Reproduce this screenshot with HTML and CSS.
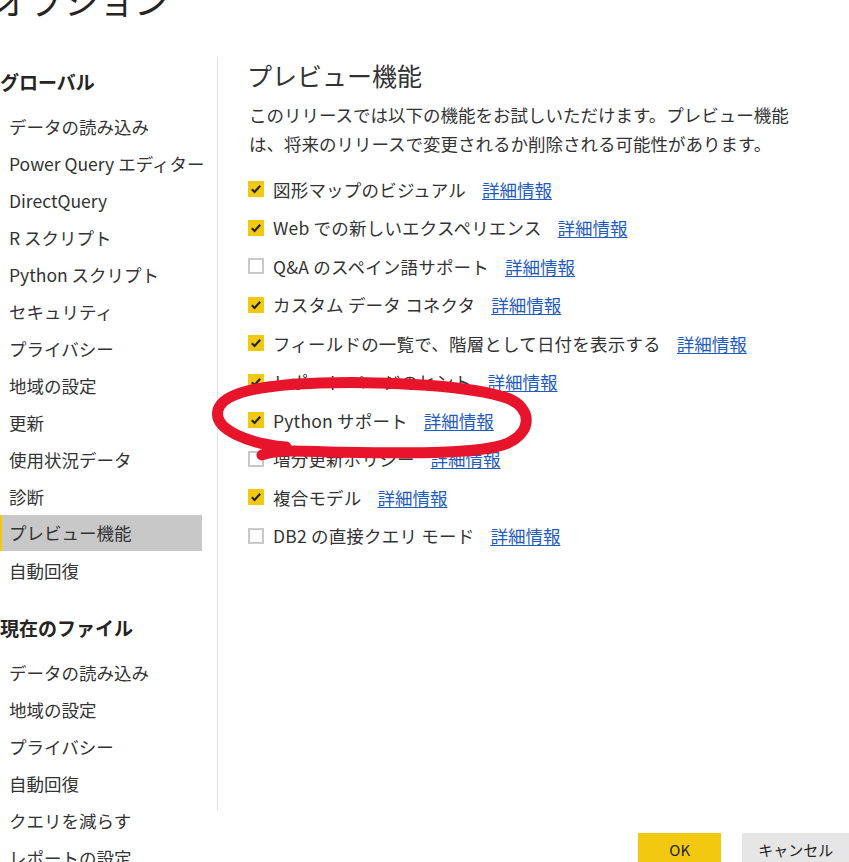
FILE: index.html
```html
<!DOCTYPE html>
<html lang="ja">
<head>
<meta charset="utf-8">
<title>オプション</title>
<link rel="stylesheet" href="styles.css">
</head>
<body>
<div class="page">
  <h1 class="title">オプション</h1>
  <div class="body">
    <nav class="sidebar">
      <h2 class="nav-heading">グローバル</h2>
      <ul class="nav-list">
        <li class="nav-item">データの読み込み</li>
        <li class="nav-item">Power Query エディター</li>
        <li class="nav-item">DirectQuery</li>
        <li class="nav-item">R スクリプト</li>
        <li class="nav-item">Python スクリプト</li>
        <li class="nav-item">セキュリティ</li>
        <li class="nav-item">プライバシー</li>
        <li class="nav-item">地域の設定</li>
        <li class="nav-item">更新</li>
        <li class="nav-item">使用状況データ</li>
        <li class="nav-item">診断</li>
        <li class="nav-item active">プレビュー機能</li>
        <li class="nav-item">自動回復</li>
      </ul>
      <h2 class="nav-heading second">現在のファイル</h2>
      <ul class="nav-list">
        <li class="nav-item">データの読み込み</li>
        <li class="nav-item">地域の設定</li>
        <li class="nav-item">プライバシー</li>
        <li class="nav-item">自動回復</li>
        <li class="nav-item">クエリを減らす</li>
        <li class="nav-item">レポートの設定</li>
      </ul>
    </nav>
    <main class="content">
      <h2 class="section-title">プレビュー機能</h2>
      <p class="desc">このリリースでは以下の機能をお試しいただけます。プレビュー機能は、将来のリリースで変更されるか削除される可能性があります。</p>
      <ul class="options">
        <li class="option"><span class="box checked"><svg viewBox="0 0 16 16"><path d="M3.8 8.2 L6.6 11 L12.2 4.8"/></svg></span><span class="label">図形マップのビジュアル</span><a class="more" href="#">詳細情報</a></li>
        <li class="option"><span class="box checked"><svg viewBox="0 0 16 16"><path d="M3.8 8.2 L6.6 11 L12.2 4.8"/></svg></span><span class="label">Web での新しいエクスペリエンス</span><a class="more" href="#">詳細情報</a></li>
        <li class="option"><span class="box"></span><span class="label">Q&amp;A のスペイン語サポート</span><a class="more" href="#">詳細情報</a></li>
        <li class="option"><span class="box checked"><svg viewBox="0 0 16 16"><path d="M3.8 8.2 L6.6 11 L12.2 4.8"/></svg></span><span class="label">カスタム データ コネクタ</span><a class="more" href="#">詳細情報</a></li>
        <li class="option"><span class="box checked"><svg viewBox="0 0 16 16"><path d="M3.8 8.2 L6.6 11 L12.2 4.8"/></svg></span><span class="label">フィールドの一覧で、階層として日付を表示する</span><a class="more" href="#">詳細情報</a></li>
        <li class="option"><span class="box checked"><svg viewBox="0 0 16 16"><path d="M3.8 8.2 L6.6 11 L12.2 4.8"/></svg></span><span class="label">レポート ページのヒント</span><a class="more" href="#">詳細情報</a></li>
        <li class="option"><span class="box checked"><svg viewBox="0 0 16 16"><path d="M3.8 8.2 L6.6 11 L12.2 4.8"/></svg></span><span class="label">Python サポート</span><a class="more" href="#">詳細情報</a></li>
        <li class="option"><span class="box"></span><span class="label">増分更新ポリシー</span><a class="more" href="#">詳細情報</a></li>
        <li class="option"><span class="box checked"><svg viewBox="0 0 16 16"><path d="M3.8 8.2 L6.6 11 L12.2 4.8"/></svg></span><span class="label">複合モデル</span><a class="more" href="#">詳細情報</a></li>
        <li class="option"><span class="box"></span><span class="label">DB2 の直接クエリ モード</span><a class="more" href="#">詳細情報</a></li>
      </ul>
    </main>
  </div>
  <footer class="footer">
    <button class="btn btn-ok">OK</button>
    <button class="btn btn-cancel">キャンセル</button>
  </footer>
  <svg class="annotation" viewBox="0 0 849 862" aria-hidden="true">
    <path d="M286 447 C 250 444, 213 430, 218 410 C 223 392, 262 385, 320 383 C 390 381, 472 386, 507 398 C 533 408, 532 432, 508 443 C 480 455, 400 453, 330 452 C 300 451, 276 449, 262 455"/>
  </svg>
</div>
</body>
</html>
```
FILE: styles.css
```css
* { box-sizing: border-box; }
html, body { margin: 0; padding: 0; }
body {
  width: 849px;
  height: 862px;
  overflow: hidden;
  background: #ffffff;
  color: #333333;
  font-family: "Noto Sans CJK JP", "Noto Sans", sans-serif;
  font-size: 17.5px;
}
.page { position: relative; display: flow-root; width: 849px; height: 862px; }
.title {
  margin: -20px 0 0 -6px;
  font-size: 35px;
  line-height: 40px;
  font-weight: 400;
  color: #252423;
}
.body { display: flex; margin-top: 37px; }
.sidebar {
  flex: 0 0 218px;
  height: 753px;
  border-right: 1px solid #e1e1e1;
  padding-top: 6px;
}
.nav-heading {
  margin: 0 0 8px 0;
  font-size: 19px;
  line-height: 37px;
  font-weight: 700;
  color: #252423;
}
.nav-heading.second { margin-top: 20px; }
.nav-list { list-style: none; margin: 0; padding: 0; }
.nav-item {
  width: 202px;
  height: 37px;
  line-height: 37px;
  padding-left: 9px;
  white-space: nowrap;
  color: #333333;
}
.nav-item.active {
  background: #c8c8c8;
  border-left: 2px solid #f2c811;
  padding-left: 7px;
  height: 36px;
  line-height: 36px;
  margin-bottom: 1px;
}
.content { flex: 1; padding-left: 29px; }
.section-title {
  margin: 0;
  font-size: 25px;
  line-height: 36px;
  font-weight: 400;
  color: #333333;
}
.desc {
  margin: 7px 0 0 2px;
  max-width: 552px;
  line-height: 29px;
}
.options { list-style: none; margin: 12px 0 0 1px; padding: 0; }
.option {
  display: flex;
  align-items: center;
  height: 38.5px;
  white-space: nowrap;
}
.box {
  flex: 0 0 16px;
  width: 16px;
  height: 16px;
  margin-right: 9px;
  border: 2px solid #c8c8c8;
  background: #ffffff;
  display: flex;
}
.box.checked { background: #f2c811; border: none; }
.box svg { width: 16px; height: 16px; }
.box path { fill: none; stroke: #252423; stroke-width: 2.2; }
.label { color: #333333; letter-spacing: 0.2px; }
.more {
  margin-left: 16px;
  color: #1f5bc0;
  text-decoration: underline;
  text-underline-offset: 2px;
}
.footer { display: flex; gap: 21px; padding-left: 638px; margin-top: 23px; }
.btn {
  height: 32px;
  border: none;
  font-family: inherit;
  font-size: 15px;
  color: #252423;
  padding: 0;
}
.btn-ok { width: 86px; background: #f2c811; }
.btn-cancel { width: 110px; background: #e6e6e6; }
.annotation {
  position: absolute;
  left: 0;
  top: 0;
  width: 849px;
  height: 862px;
  pointer-events: none;
}
.annotation path {
  fill: none;
  stroke: #e8142b;
  stroke-width: 11;
  stroke-linecap: round;
  stroke-linejoin: round;
}
```
